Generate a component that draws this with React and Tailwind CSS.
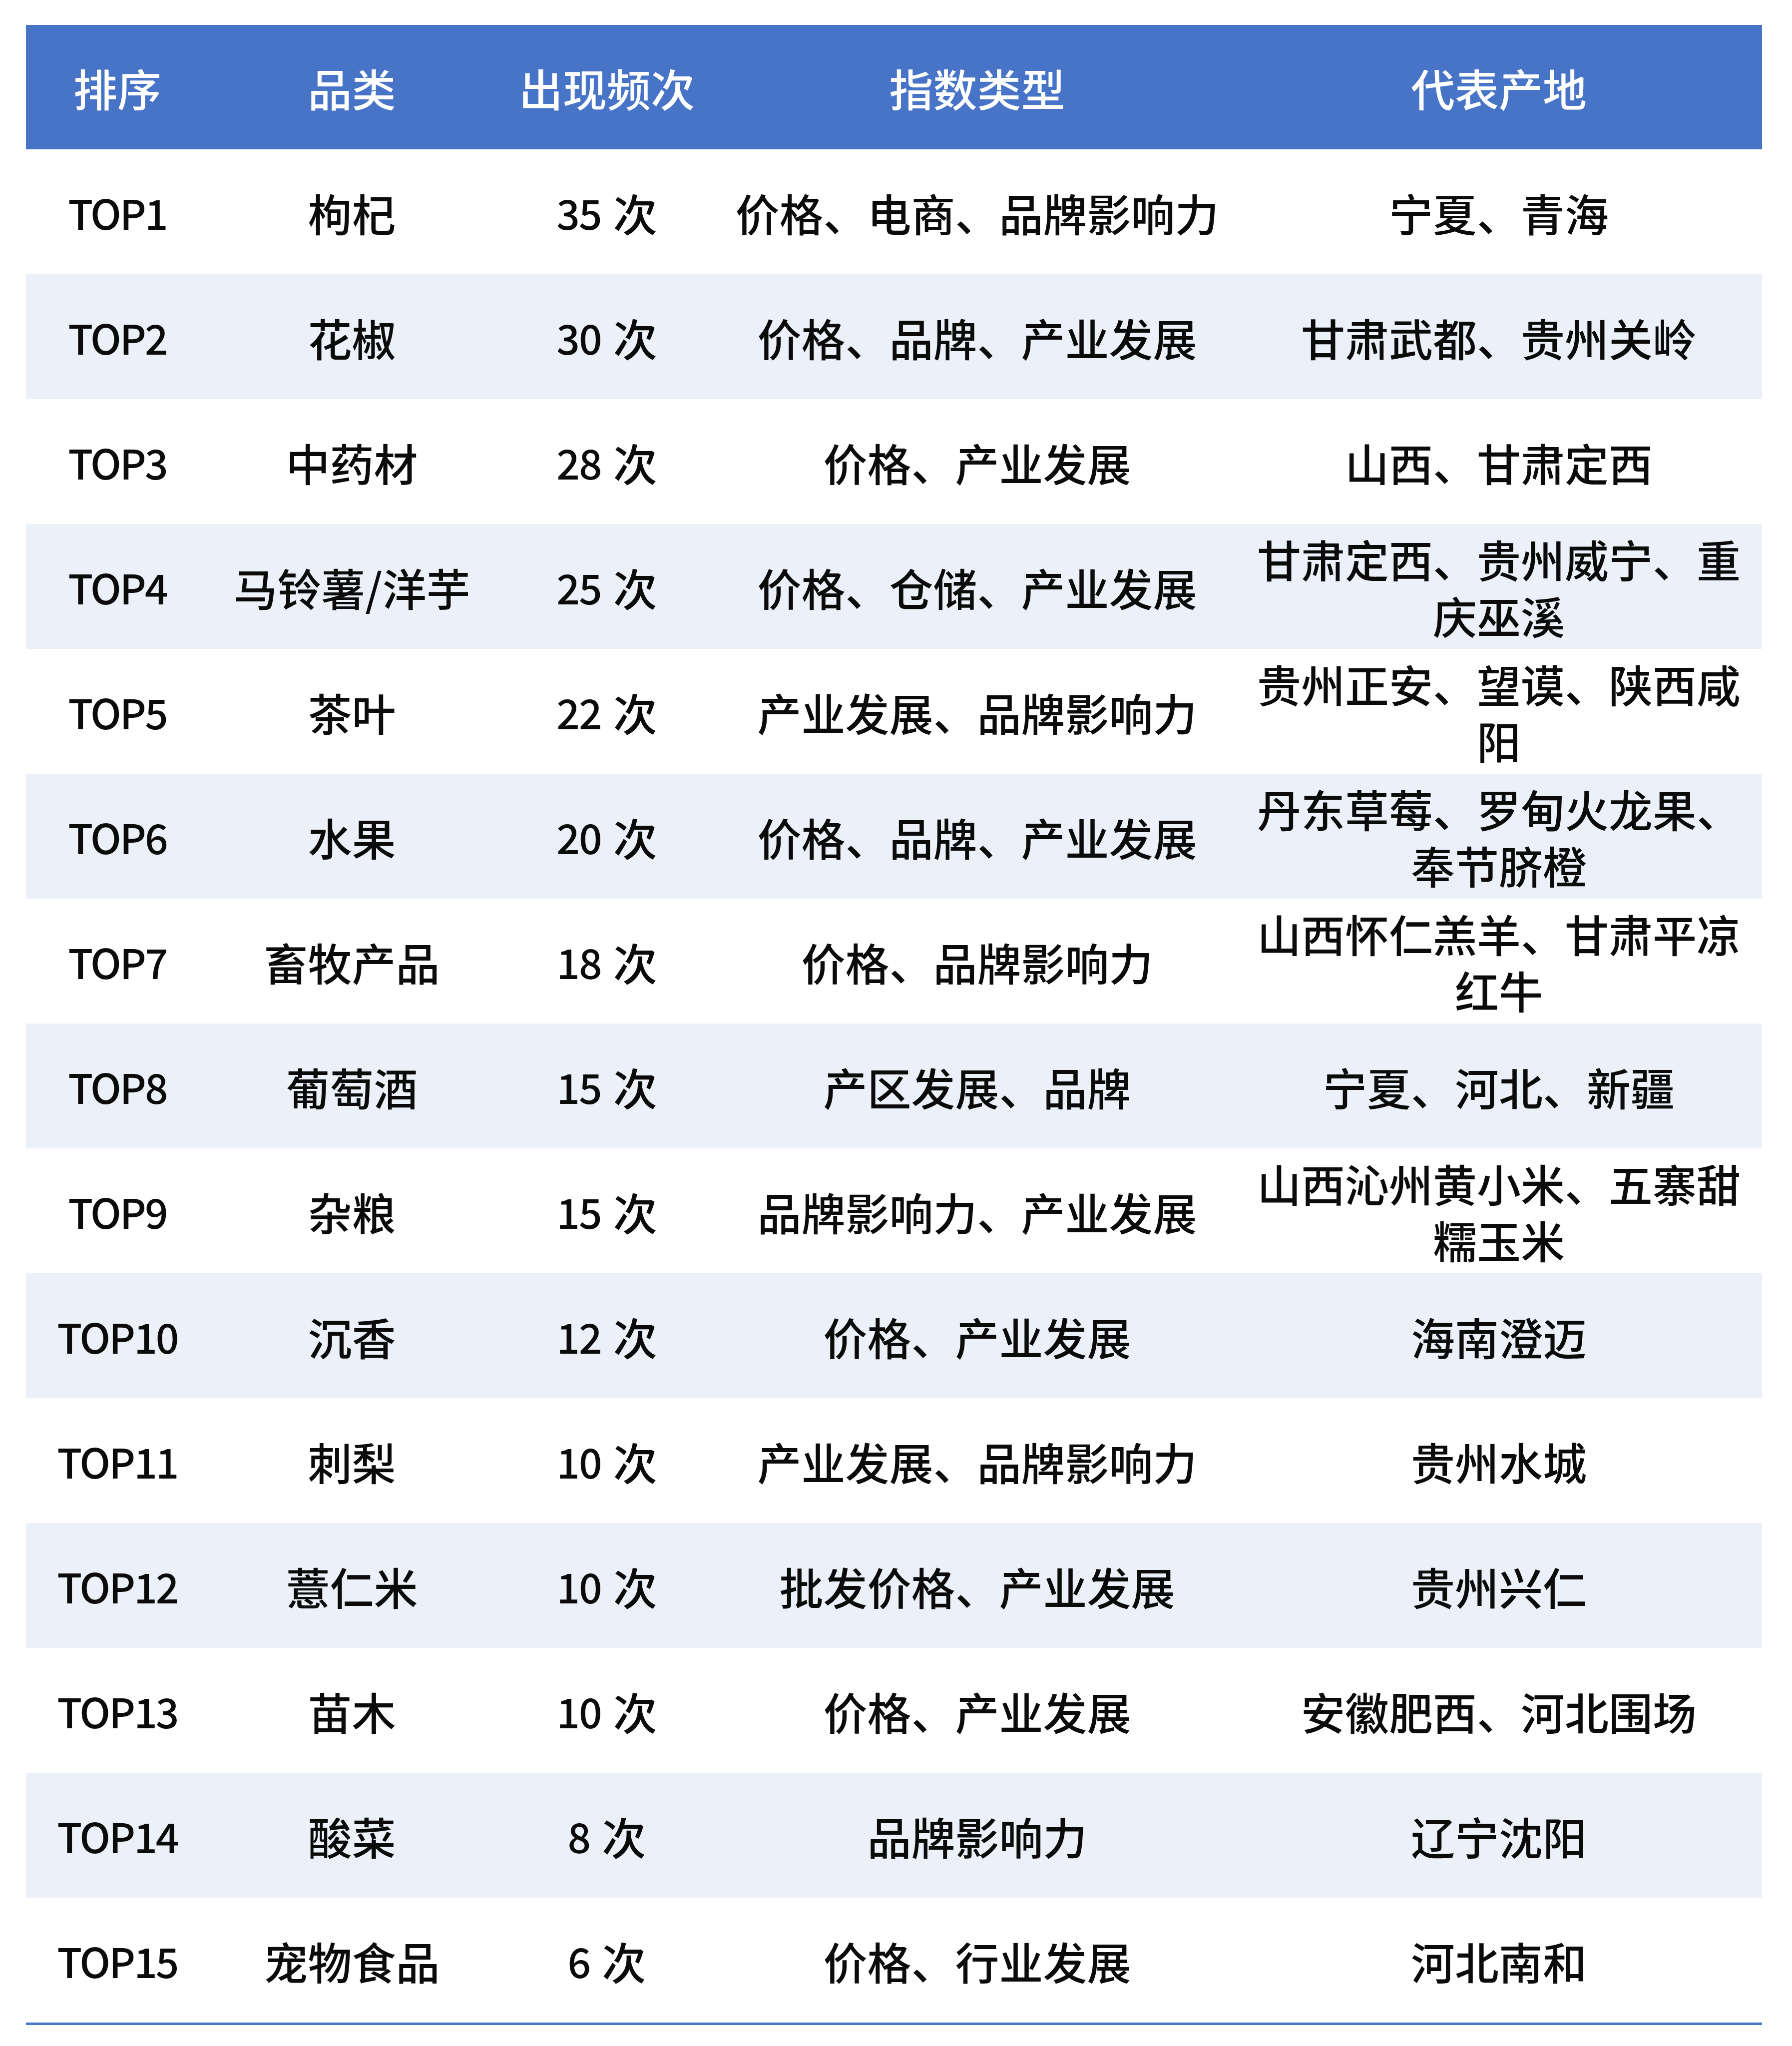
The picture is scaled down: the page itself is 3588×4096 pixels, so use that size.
import React from "react";

const rows = [
  ["TOP1", "枸杞", "35", "价格、电商、品牌影响力", "宁夏、青海"],
  ["TOP2", "花椒", "30", "价格、品牌、产业发展", "甘肃武都、贵州关岭"],
  ["TOP3", "中药材", "28", "价格、产业发展", "山西、甘肃定西"],
  ["TOP4", "马铃薯/洋芋", "25", "价格、仓储、产业发展", "甘肃定西、贵州威宁、重庆巫溪"],
  ["TOP5", "茶叶", "22", "产业发展、品牌影响力", "贵州正安、望谟、陕西咸阳"],
  ["TOP6", "水果", "20", "价格、品牌、产业发展", "丹东草莓、罗甸火龙果、奉节脐橙"],
  ["TOP7", "畜牧产品", "18", "价格、品牌影响力", "山西怀仁羔羊、甘肃平凉红牛"],
  ["TOP8", "葡萄酒", "15", "产区发展、品牌", "宁夏、河北、新疆"],
  ["TOP9", "杂粮", "15", "品牌影响力、产业发展", "山西沁州黄小米、五寨甜糯玉米"],
  ["TOP10", "沉香", "12", "价格、产业发展", "海南澄迈"],
  ["TOP11", "刺梨", "10", "产业发展、品牌影响力", "贵州水城"],
  ["TOP12", "薏仁米", "10", "批发价格、产业发展", "贵州兴仁"],
  ["TOP13", "苗木", "10", "价格、产业发展", "安徽肥西、河北围场"],
  ["TOP14", "酸菜", "8", "品牌影响力", "辽宁沈阳"],
  ["TOP15", "宠物食品", "6", "价格、行业发展", "河北南和"],
];

const cols = "grid grid-cols-[366px_573px_448px_1035px_1054px]";
const cell = "flex items-center justify-center text-center px-[20px] leading-[113px]";

export default function App() {
  return (
    <div className="min-h-screen bg-white pt-[50px] pl-[52px] font-['Noto_Sans_CJK_SC',sans-serif] font-medium text-[88px] text-[#0b0b0b]">
      <div className="w-[3476px] border-b-[5px] border-[#4b77c9]">
        {/* header */}
        <div className={`${cols} h-[249px] bg-[#4874c8] text-white`}>
          {["排序", "品类", "出现频次", "指数类型", "代表产地"].map((h) => (
            <div key={h} className={cell}>
              {h}
            </div>
          ))}
        </div>

        {rows.map((r, i) => (
          <div
            key={r[0]}
            className={`${cols} h-[250px] ${i % 2 === 1 ? "bg-[#ecf1f9]" : "bg-white"}`}
          >
            <div className={`${cell} text-[82px] tracking-[-3px]`}>{r[0]}</div>
            <div className={cell}>{r[1]}</div>
            <div className={cell}>
              <span className="text-[82px] tracking-[-2px]">{r[2]}</span>
              <span className="ml-[24px]">次</span>
            </div>
            <div className={cell}>{r[3]}</div>
            <div className={cell}>{r[4]}</div>
          </div>
        ))}
      </div>
    </div>
  );
}
